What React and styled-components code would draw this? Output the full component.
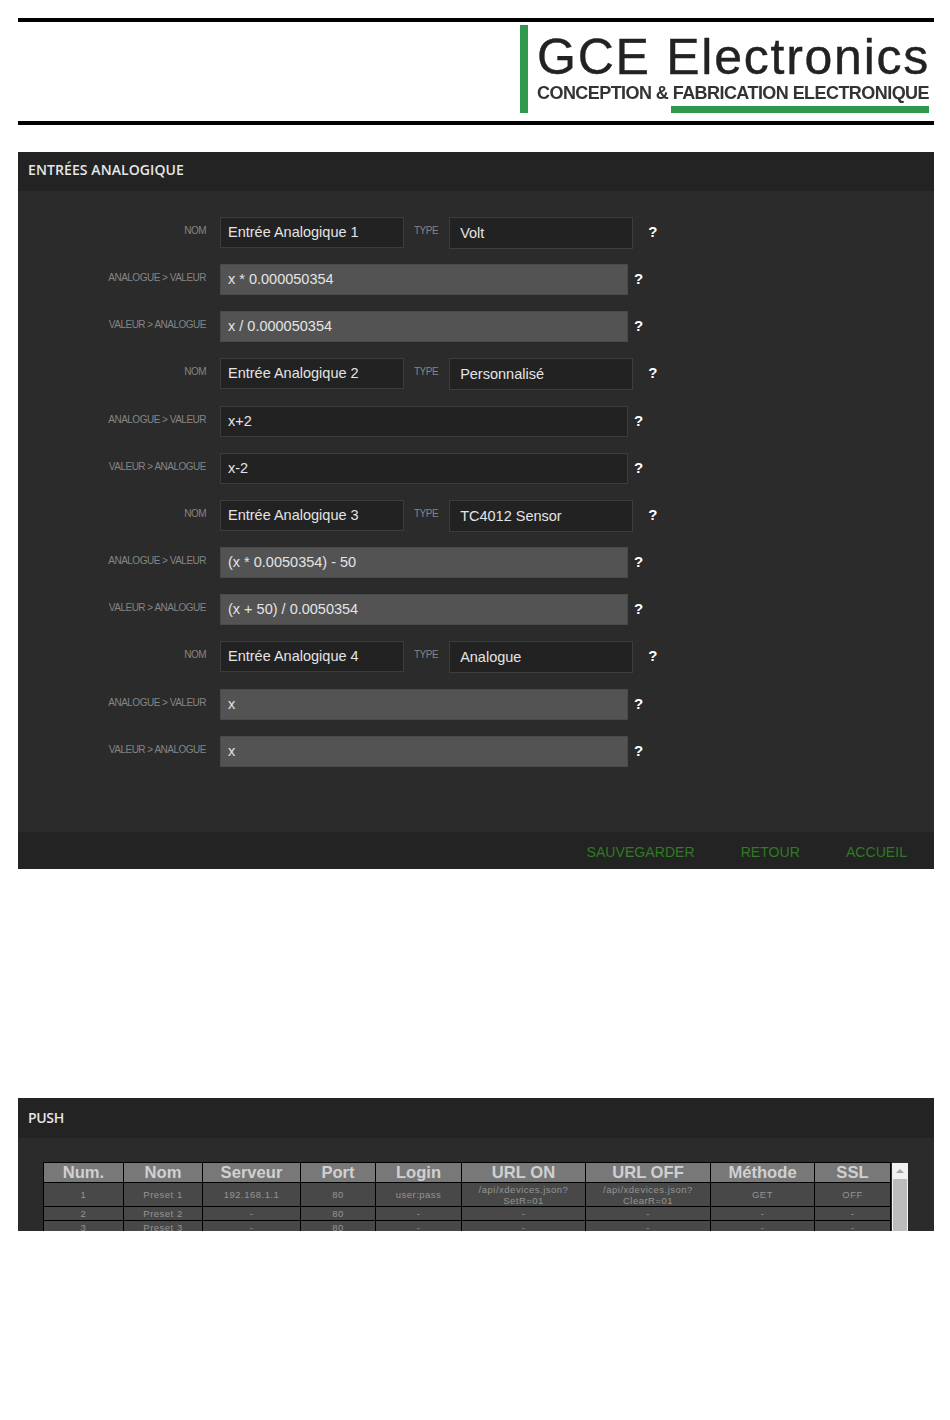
import React from "react";
import styled, { createGlobalStyle } from "styled-components";

const Global = createGlobalStyle`
  html, body { margin: 0; padding: 0; background: #fff; }
  body { font-family: "Liberation Sans", Arial, sans-serif; }
`;

const Page = styled.div`
  padding: 18px 16px 0 18px;
  height: 1402px;
  box-sizing: border-box;
`;

const Banner = styled.header`
  box-sizing: border-box;
  height: 107px;
  border-top: 4px solid #000;
  border-bottom: 4px solid #000;
  padding-top: 3px;
  display: flex;
  justify-content: flex-end;
`;

const Logo = styled.div`
  width: 414px;
  height: 88px;
  box-sizing: border-box;
  border-left: 8px solid #2f9a4d;
  padding-left: 9px;
  color: #222;
  filter: blur(0.35px);
`;

const LogoName = styled.div`
  font-size: 50px;
  line-height: 54px;
  margin-top: 5px;
  white-space: nowrap;
  letter-spacing: 1.75px;
  -webkit-text-stroke: 0.4px #222;
`;

const LogoTag = styled.div`
  font-size: 18px;
  font-weight: 700;
  line-height: 20px;
  margin-top: -1px;
  white-space: nowrap;
  letter-spacing: -0.56px;
  color: #333;
`;

const LogoRule = styled.div`
  height: 7px;
  margin: 3px 0 0 134px;
  width: 258px;
  background: #2f9a4d;
`;

const Panel = styled.section`
  margin-top: ${(p) => p.$top}px;
  height: ${(p) => p.$height}px;
  overflow: hidden;
  background: #2b2b2b;
  display: flex;
  flex-direction: column;
`;

const PanelHead = styled.h2`
  margin: 0;
  flex: 0 0 39px;
  padding-left: 10px;
  background: #232323;
  color: #e6e6e6;
  font-family: "Open Sans", sans-serif;
  font-size: 14px;
  font-weight: 600;
  line-height: ${(p) => p.$lh}px;
  letter-spacing: ${(p) => p.$ls}px;
`;

const Form = styled.div`
  flex: 1;
  padding-top: 26px;
  display: grid;
  grid-auto-rows: 47.17px;
`;

const Row = styled.div`
  display: flex;
  align-items: flex-start;
`;

const Label = styled.span`
  flex: 0 0 ${(p) => p.$w}px;
  margin-left: ${(p) => p.$ml || 0}px;
  text-align: ${(p) => p.$align || "right"};
  color: #858585;
  font-size: 10px;
  line-height: 12px;
  padding-top: 8px;
  letter-spacing: -0.5px;
  white-space: nowrap;
`;

const Field = styled.div`
  box-sizing: border-box;
  width: ${(p) => p.$w}px;
  height: ${(p) => p.$h || 31}px;
  margin-left: ${(p) => p.$ml || 0}px;
  padding-left: ${(p) => p.$pad || 7}px;
  background: ${(p) => (p.$off ? "#535353" : "#222222")};
  border: 1px solid ${(p) => (p.$off ? "#4a4a4a" : "#3d3d3d")};
  color: #e4e4e4;
  font-size: 14.5px;
  line-height: ${(p) => (p.$h ? 31 : 29)}px;
  white-space: nowrap;
`;

const Help = styled.span`
  margin-left: ${(p) => p.$ml}px;
  color: #fff;
  font-size: 15px;
  font-weight: 700;
  line-height: 30px;
`;

const Footer = styled.footer`
  flex: 0 0 37px;
  background: #232323;
  display: flex;
  justify-content: flex-end;
  gap: 46px;
  padding: 12px 27px 0 0;
  box-sizing: border-box;
`;

const FootLink = styled.a`
  color: #2f7a22;
  font-size: 14.1px;
  line-height: 16px;
`;

const TableArea = styled.div`
  display: flex;
  padding: 25px 0 0 25px;
  gap: 1px;
`;

const Table = styled.table`
  width: 848px;
  table-layout: fixed;
  border-collapse: collapse;
  background: #484848;
  align-self: flex-start;
  margin: -1px 0 0 0;
`;

const Th = styled.th`
  padding: 1px 0 0;
  height: 20px;
  box-sizing: border-box;
  border: 1px solid #000;
  background: #787878;
  color: #d0d0d0;
  font-size: 16.6px;
  font-weight: 700;
  line-height: 18px;
`;

const Td = styled.td`
  padding: 0;
  height: ${(p) => p.$h}px;
  border: 1px solid #000;
  color: #949494;
  font-size: 9.5px;
  line-height: 11px;
  letter-spacing: 0.5px;
  text-align: center;
`;

const Scrollbar = styled.div`
  flex: 0 0 16px;
  height: 100px;
  background: #f1f1f1;
  display: flex;
  flex-direction: column;
  align-items: center;
`;

const ScrollArrow = styled.svg`
  flex: 0 0 16px;
  width: 16px;
  height: 16px;
`;

const ScrollThumb = styled.div`
  width: 14px;
  height: 84px;
  background: #bcbcbc;
`;

const inputs = [
  ["Entrée Analogique 1", "Volt", "x * 0.000050354", "x / 0.000050354", true],
  ["Entrée Analogique 2", "Personnalisé", "x+2", "x-2", false],
  ["Entrée Analogique 3", "TC4012 Sensor", "(x * 0.0050354) - 50", "(x + 50) / 0.0050354", true],
  ["Entrée Analogique 4", "Analogue", "x", "x", true],
];

const columns = [
  ["Num.", 80], ["Nom", 79], ["Serveur", 98], ["Port", 75], ["Login", 86],
  ["URL ON", 124], ["URL OFF", 125], ["Méthode", 104], ["SSL", 76],
];

const rows = [
  { h: 23, cells: ["1", "Preset 1", "192.168.1.1", "80", "user:pass", <>/api/xdevices.json?<br />SetR=01</>, <>/api/xdevices.json?<br />ClearR=01</>, "GET", "OFF"] },
  { h: 13, cells: ["2", "Preset 2", "-", "80", "-", "-", "-", "-", "-"] },
  { h: 13, cells: ["3", "Preset 3", "-", "80", "-", "-", "-", "-", "-"] },
];

export default function App() {
  return (
    <Page>
      <Global />
      <Banner>
        <Logo>
          <LogoName>GCE Electronics</LogoName>
          <LogoTag>CONCEPTION &amp; FABRICATION ELECTRONIQUE</LogoTag>
          <LogoRule />
        </Logo>
      </Banner>

      <Panel $top={27} $height={717}>
        <PanelHead $lh={36} $ls={0.09}>ENTRÉES ANALOGIQUE</PanelHead>
        <Form>
          {inputs.map(([name, type, a, b, off]) => (
            <React.Fragment key={name}>
              <Row>
                <Label $w={188}>NOM</Label>
                <Field $w={184} $ml={14}>{name}</Field>
                <Label $w={24} $ml={10} $align="left">TYPE</Label>
                <Field $w={184} $h={32} $ml={11} $pad={10}>{type}</Field>
                <Help $ml={15}>?</Help>
              </Row>
              <Row>
                <Label $w={188}>ANALOGUE &gt; VALEUR</Label>
                <Field $w={408} $ml={14} $off={off}>{a}</Field>
                <Help $ml={6}>?</Help>
              </Row>
              <Row>
                <Label $w={188}>VALEUR &gt; ANALOGUE</Label>
                <Field $w={408} $ml={14} $off={off}>{b}</Field>
                <Help $ml={6}>?</Help>
              </Row>
            </React.Fragment>
          ))}
        </Form>
        <Footer>
          <FootLink>SAUVEGARDER</FootLink>
          <FootLink>RETOUR</FootLink>
          <FootLink>ACCUEIL</FootLink>
        </Footer>
      </Panel>

      <Panel $top={229} $height={133}>
        <PanelHead $lh={40} $ls={-0.35}>PUSH</PanelHead>
        <TableArea>
          <Table>
            <colgroup>
              {columns.map(([n, w]) => <col key={n} style={{ width: w }} />)}
            </colgroup>
            <thead>
              <tr>{columns.map(([n]) => <Th key={n}>{n}</Th>)}</tr>
            </thead>
            <tbody>
              {rows.map((r, i) => (
                <tr key={i}>
                  {r.cells.map((c, j) => <Td key={j} $h={r.h}>{c}</Td>)}
                </tr>
              ))}
            </tbody>
          </Table>
          <Scrollbar>
            <ScrollArrow viewBox="0 0 16 16"><path d="M4 10 L8 6 L12 10 Z" fill="#a6a6a6" /></ScrollArrow>
            <ScrollThumb />
          </Scrollbar>
        </TableArea>
      </Panel>
    </Page>
  );
}
